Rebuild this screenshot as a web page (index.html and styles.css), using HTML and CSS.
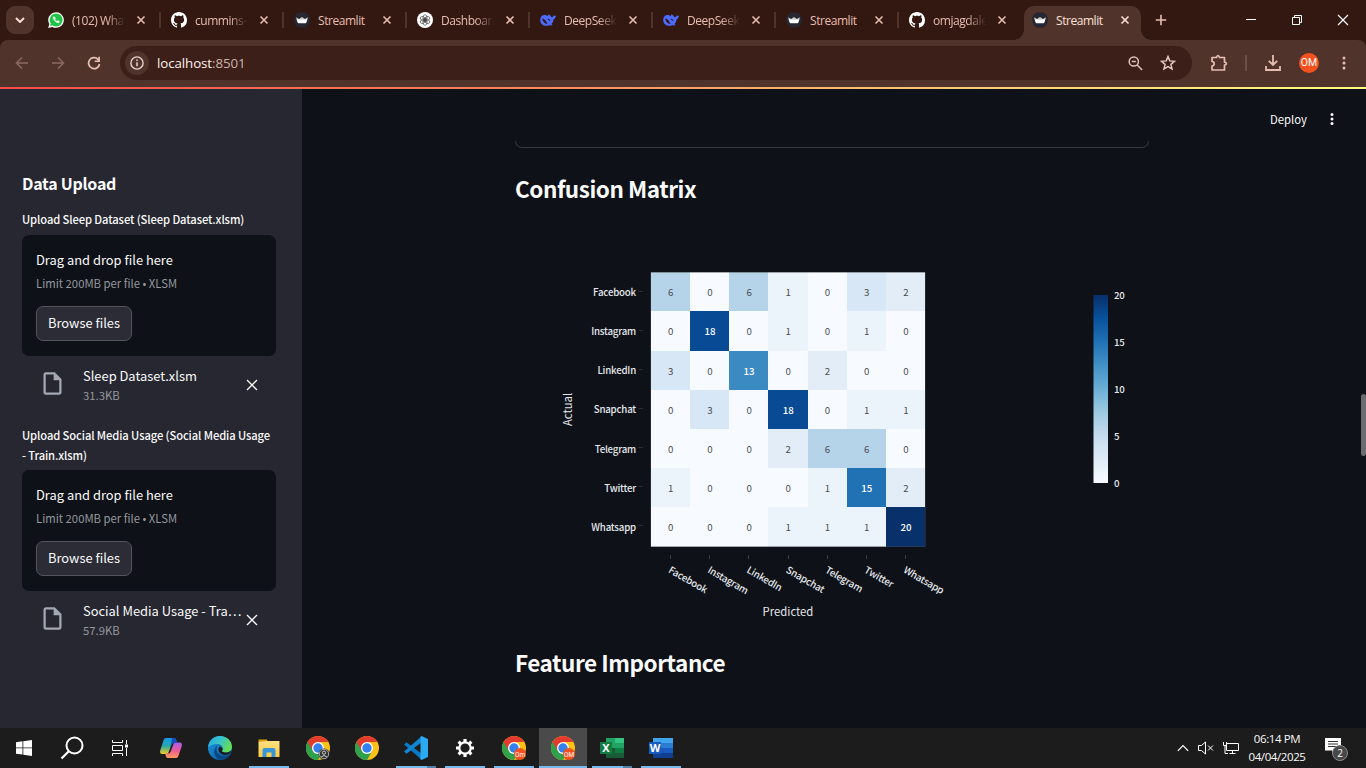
FILE: index.html
```html
<!DOCTYPE html>
<html lang="en">
<head>
<meta charset="utf-8">
<title>Streamlit</title>
<link rel="stylesheet" href="styles.css">
</head>
<body>
<svg class="defs" width="0" height="0" aria-hidden="true">
  <defs>
    <linearGradient id="blues" x1="0" y1="1" x2="0" y2="0">
      <stop offset="0" stop-color="#f7fbff"/><stop offset=".125" stop-color="#deebf7"/><stop offset=".25" stop-color="#c6dbef"/><stop offset=".375" stop-color="#9ecae1"/><stop offset=".5" stop-color="#6baed6"/><stop offset=".625" stop-color="#4292c6"/><stop offset=".75" stop-color="#2171b5"/><stop offset=".875" stop-color="#08519c"/><stop offset="1" stop-color="#08306b"/>
    </linearGradient>
    <linearGradient id="crownfill" x1="0" y1="0" x2="0" y2="1"><stop offset="0" stop-color="#999"/><stop offset=".6" stop-color="#fff"/></linearGradient>
    <linearGradient id="edgeTop" x1="0" y1="0" x2="1" y2=".4"><stop offset="0" stop-color="#2aa8dc"/><stop offset=".5" stop-color="#35c3cf"/><stop offset="1" stop-color="#62de57"/></linearGradient>
    <linearGradient id="edgeLow" x1="0" y1="0" x2="1" y2="1"><stop offset="0" stop-color="#1b9de2"/><stop offset="1" stop-color="#0b4f98"/></linearGradient>
    <linearGradient id="copA" x1="0" y1="0" x2="0" y2="1"><stop offset="0" stop-color="#1699e8"/><stop offset=".5" stop-color="#27a9a8"/><stop offset="1" stop-color="#f4cf22"/></linearGradient>
    <linearGradient id="copB" x1="0" y1="0" x2="0" y2="1"><stop offset="0" stop-color="#a95bef"/><stop offset=".55" stop-color="#ee5e93"/><stop offset="1" stop-color="#fb9e54"/></linearGradient>
    <linearGradient id="folder" x1="0" y1="0" x2="0" y2="1"><stop offset="0" stop-color="#ffe083"/><stop offset="1" stop-color="#fbc945"/></linearGradient>
  </defs>
  <symbol id="x" viewBox="0 0 10 10"><path d="M1.500 1.500l7 7M8.500 1.500l-7 7" fill="none" stroke="currentColor" stroke-width="1.600"/></symbol>
  <symbol id="crown" viewBox="0 0 16 16"><circle cx="8" cy="8" r="8" fill="#262730"/><path d="M1.900 5.300 5.200 7 8 4.700 10.800 7 14.100 5.300 12.500 10.300Q12.200 11.200 11.300 11.200H4.700Q3.800 11.200 3.500 10.300Z" fill="url(#crownfill)"/></symbol>
  <symbol id="github" viewBox="0 0 16 16"><path fill="#fff" d="M8 0C3.58 0 0 3.58 0 8c0 3.54 2.29 6.53 5.47 7.59.4.07.55-.17.55-.38 0-.19-.01-.82-.01-1.49-2.01.37-2.53-.49-2.69-.94-.09-.23-.48-.94-.82-1.13-.28-.15-.68-.52-.01-.53.63-.01 1.08.58 1.23.82.72 1.21 1.87.87 2.33.66.07-.52.28-.87.51-1.07-1.78-.2-3.64-.89-3.64-3.95 0-.87.31-1.59.82-2.15-.08-.2-.36-1.02.08-2.12 0 0 .67-.21 2.2.82.64-.18 1.32-.27 2-.27.68 0 1.36.09 2 .27 1.53-1.04 2.2-.82 2.2-.82.44 1.1.16 1.92.08 2.12.51.56.82 1.27.82 2.15 0 3.07-1.87 3.75-3.65 3.95.29.25.54.73.54 1.48 0 1.07-.01 1.93-.01 2.2 0 .21.15.46.55.38A8.013 8.013 0 0016 8c0-4.42-3.58-8-8-8z"/></symbol>
  <symbol id="whale" viewBox="0 0 16 16"><path fill="#4d6bfe" d="M.2 8C.2 4.500 2.600 2.600 5.200 3c1.400.2 2 .9 2.900 1.300-.3-.8 0-1.500.6-2.100 1.500.7 2 2.500 3.200 3 1-.2 1.400-1 1.900-1.700.4.4 1.200.5 2 .2-.1 1.700-.9 3.100-2.200 3.500-.3 2.300-1.100 3.800-2.300 4.900l1.500.9c-1.600.8-3.200.1-4.100.5C4.500 14.800.2 12.300.2 8Zm2.200-1.800c-.1 2.900 2.300 5.700 5.200 5.600C6.400 9.800 5 6.900 2.400 6.200ZM7 7.300c1.400.1 2.200 1.400 3.300 2.200.3-1.300-.8-2.600-2.100-2.800Z"/></symbol>
  <symbol id="file" viewBox="0 0 24 24"><path fill="#a3a8b4" d="M14 2H6c-1.100 0-1.990.9-1.990 2L4 20c0 1.100.89 2 1.990 2H18c1.100 0 2-.9 2-2V8l-6-6zM6 20V4h7v5h5v11H6z"/></symbol>
  <symbol id="chrome" viewBox="0 0 24 24">
    <circle cx="12" cy="12" r="12" fill="#fbc116"/>
    <path d="M12 12 1.600 6A12 12 0 0 0 12 24L17.200 15Z" fill="#2da14c"/>
    <path d="M1.610 6A12 12 0 0 1 22.390 6H12L6.800 15Z" fill="#e33b2e"/>
    <circle cx="12" cy="12" r="6" fill="#fff"/><circle cx="12" cy="12" r="4.700" fill="#3480ee"/>
  </symbol>
</svg>

<div class="tabstrip">
  <div class="tabsearch"><svg width="10" height="6" viewBox="0 0 10 6"><path d="M1 1l4 4 4-4" fill="none" stroke="#fbdcd3" stroke-width="2"/></svg></div>
  <div class="tab"><svg class="fav" viewBox="0 0 16 16"><path d="M.2 15.900 1.300 12A7.800 7.800 0 1 1 4.300 14.900Z" fill="#fff"/><circle cx="8.100" cy="7.900" r="6.500" fill="#20c446"/><path d="M2 14l.8-2.900 2.100 2.100Z" fill="#20c446"/><path d="M5.300 4.900c-.7 2 2.900 6.300 5.600 5.800l.5-1.300-1.700-.8-.8.8Q7.500 8.800 6.700 7.300l.6-.8-.7-1.700Z" fill="#fff" stroke="#fff" stroke-width=".5"/></svg><span class="title fade">(102) WhatsApp</span><svg class="close"><use href="#x"/></svg></div>
  <div class="tab"><svg class="fav"><use href="#github"/></svg><span class="title fade">cummins-</span><svg class="close"><use href="#x"/></svg></div>
  <div class="tab"><svg class="fav"><use href="#crown"/></svg><span class="title">Streamlit</span><svg class="close"><use href="#x"/></svg></div>
  <div class="tab"><svg class="fav" viewBox="0 0 16 16"><circle cx="8" cy="8" r="8" fill="#fff"/><g fill="none" stroke="#333" stroke-width=".6"><ellipse cx="8" cy="5.800" rx="2" ry="3.100"/><ellipse cx="8" cy="5.800" rx="2" ry="3.100" transform="rotate(60 8 8)"/><ellipse cx="8" cy="5.800" rx="2" ry="3.100" transform="rotate(120 8 8)"/><ellipse cx="8" cy="5.800" rx="2" ry="3.100" transform="rotate(180 8 8)"/><ellipse cx="8" cy="5.800" rx="2" ry="3.100" transform="rotate(240 8 8)"/><ellipse cx="8" cy="5.800" rx="2" ry="3.100" transform="rotate(300 8 8)"/></g></svg><span class="title fade">Dashboard</span><svg class="close"><use href="#x"/></svg></div>
  <div class="tab"><svg class="fav"><use href="#whale"/></svg><span class="title fade">DeepSeek</span><svg class="close"><use href="#x"/></svg></div>
  <div class="tab"><svg class="fav"><use href="#whale"/></svg><span class="title fade">DeepSeek</span><svg class="close"><use href="#x"/></svg></div>
  <div class="tab"><svg class="fav"><use href="#crown"/></svg><span class="title">Streamlit</span><svg class="close"><use href="#x"/></svg></div>
  <div class="tab bare"><svg class="fav"><use href="#github"/></svg><span class="title fade">omjagdale</span><svg class="close"><use href="#x"/></svg></div>
  <div class="tab active"><svg class="fav"><use href="#crown"/></svg><span class="title">Streamlit</span><svg class="close"><use href="#x"/></svg></div>
  <svg class="newtab" width="12" height="12" viewBox="0 0 12 12"><path d="M6 .8v10.400M.8 6h10.400" stroke="#e7bdb1" stroke-width="1.600"/></svg>
  <div class="winctl">
    <svg width="46" height="40"><path d="M18 19.500h10" stroke="#fff"/></svg>
    <svg width="46" height="40"><path d="M18.500 17.500h7v7h-7zM20.500 17.500v-2h7v7h-2" fill="none" stroke="#fff"/></svg>
    <svg width="46" height="40"><path d="M18 15l10 10M28 15 18 25" stroke="#fff" stroke-width="1.200"/></svg>
  </div>
</div>

<div class="toolbarwrap"><div class="toolbar">
  <div class="nav">
    <svg width="14" height="14" viewBox="0 0 14 14"><path d="M13 7H2M7 1.500 1.500 7 7 12.500" fill="none" stroke="#8b685f" stroke-width="1.600"/></svg>
    <svg width="14" height="14" viewBox="0 0 14 14"><path d="M1 7h11M7 1.500 12.500 7 7 12.500" fill="none" stroke="#8b685f" stroke-width="1.600"/></svg>
    <svg width="14" height="14" viewBox="0 0 14 14"><path d="M12.500 8A5.500 5.500 0 1 1 11 3.300L12 4.500" fill="none" stroke="#edc4b8" stroke-width="1.700"/><path d="M12.900.8V6H7.700V4.500h3.600V.8Z" fill="#edc4b8"/></svg>
  </div>
  <div class="omnibox">
    <span class="info"><svg width="14" height="14" viewBox="0 0 14 14"><circle cx="7" cy="7" r="6.100" fill="none" stroke="#e9d2cb" stroke-width="1.400"/><path d="M7 6.200v4M7 3.600v1.500" stroke="#e9d2cb" stroke-width="1.500"/></svg></span>
    <span class="url">localhost<i>:8501</i></span>
    <svg class="lens" width="15" height="15" viewBox="0 0 15 15"><circle cx="5.800" cy="5.500" r="4.600" fill="none" stroke="#dcc3bb" stroke-width="1.500"/><path d="M9.200 9l4.900 5M3.800 5.500h4" stroke="#dcc3bb" stroke-width="1.500"/></svg>
    <svg width="16" height="16" viewBox="0 0 16 16"><path d="M8 1.600l1.800 4.300 4.700.4-3.600 3 1.100 4.600L8 11.500l-4 2.400 1.100-4.600-3.600-3 4.700-.4Z" fill="none" stroke="#e1c8c0" stroke-width="1.500"/></svg>
  </div>
  <svg class="ext" width="18" height="18" viewBox="0 0 18 18"><path d="M2 3.500H6.500Q7 1.600 8 1.600T9.500 3.500H14.500V8.200Q16.400 8.500 16.400 9.700T14.500 11V16H2V12Q4.200 11.600 4.200 9.700T2 7.500Z" fill="none" stroke="#e7bdb1" stroke-width="1.700" stroke-linejoin="round"/></svg>
  <span class="bar"></span>
  <svg width="16" height="16" viewBox="0 0 16 16"><path d="M8 0v10M3.800 5.800 8 10l4.200-4.200M1 11v4h14v-4" fill="none" stroke="#e7bdb1" stroke-width="1.800"/></svg>
  <span class="avatar">OM</span>
  <svg width="4" height="14" viewBox="0 0 4 14" fill="#e7bdb1"><circle cx="2" cy="2" r="1.500"/><circle cx="2" cy="7" r="1.500"/><circle cx="2" cy="12" r="1.500"/></svg>
</div></div>
<div class="rainbow"></div>

<div class="app">
  <aside class="sidebar">
    <h2>Data Upload</h2>
    <p class="label">Upload Sleep Dataset (Sleep Dataset.xlsm)</p>
    <div class="drop"><p>Drag and drop file here</p><small>Limit 200MB per file • XLSM</small><button>Browse files</button></div>
    <div class="filerow"><svg class="doc"><use href="#file"/></svg><div class="meta"><p>Sleep Dataset.xlsm</p><small>31.3KB</small></div><svg class="rm" viewBox="0 0 12 12"><path d="M1 1l10 10M11 1 1 11" stroke="#fafafa" stroke-width="1.300"/></svg></div>
    <p class="label second">Upload Social Media Usage (Social Media Usage<br>- Train.xlsm)</p>
    <div class="drop"><p>Drag and drop file here</p><small>Limit 200MB per file • XLSM</small><button>Browse files</button></div>
    <div class="filerow"><svg class="doc"><use href="#file"/></svg><div class="meta"><p>Social Media Usage - Tra…</p><small>57.9KB</small></div><svg class="rm" viewBox="0 0 12 12"><path d="M1 1l10 10M11 1 1 11" stroke="#fafafa" stroke-width="1.300"/></svg></div>
  </aside>
  <main class="main">
    <header class="appbar"><span>Deploy</span><svg width="4" height="14" viewBox="0 0 4 14" fill="#fafafa"><circle cx="2" cy="2.500" r="1.500"/><circle cx="2" cy="7" r="1.500"/><circle cx="2" cy="11.500" r="1.500"/></svg></header>
    <div class="block">
      <div class="cardend"></div>
      <h3>Confusion Matrix</h3>
      <svg class="chart" id="chart" width="634" height="428" viewBox="515 214 634 428"></svg>
      <h3>Feature Importance</h3>
    </div>
    <span class="thumb"></span>
  </main>
</div>

<footer class="taskbar">
  <div class="sys">
    <span><svg width="16" height="16" viewBox="0 0 16 16" fill="#fff"><path d="M0 2.200 6.500 1.300V7.500H0ZM7.300 1.200 16 0V7.500H7.300ZM0 8.300H6.500V14.600L0 13.700ZM7.300 8.300H16V16L7.300 14.800Z"/></svg></span>
    <span><svg width="24" height="24" viewBox="0 0 24 24"><circle cx="14.500" cy="9.500" r="8" fill="none" stroke="#fff" stroke-width="2"/><path d="M8.800 15.200 1.500 22.500" stroke="#fff" stroke-width="2.200"/></svg></span>
    <span><svg width="16" height="16" viewBox="0 0 16 16"><path d="M.5 0v2.500h10V0M.5 16v-2.500h10V16M.5 5.500h10v5H.5zM14.500 0v4M14.500 8v8" fill="none" stroke="#fff"/><path d="M13 4.500h3v3h-3z" fill="#fff"/></svg></span>
  </div>
  <div class="apps">
    <span><svg width="22" height="20" viewBox="0 0 22 20"><path d="M6 0h8q1.500 0 2 1.500L17 5h-3q-2 0-2.700 2L8.500 14.500Q8 16 6 16H2Q-.8 16 .4 12L3.600 2Q4.200 0 6 0Z" fill="url(#copA)"/><path d="M16 20H8q-1.500 0-2-1.500L5 15.500h3q2 0 2.700-2L13.500 6Q14 4.500 16 4.500h4q2.800 0 1.600 4L18.400 18Q17.800 20 16 20Z" fill="url(#copB)"/><path d="M12 0h2q1.500 0 2 1.500L17 5h-3q-2 0-2.700 2L10.500 9Z" fill="#164fc2"/></svg></span>
    <span><svg width="24" height="24" viewBox="0 0 24 24"><circle cx="12" cy="12" r="12" fill="url(#edgeLow)"/><path d="M.1 11C1 4.600 5.700 0 12 0c7 0 12 5 12 11 0 3.600-2.800 5.600-6 5.600-3.700 0-4.700-1.300-3.600-2.600C15.800 12 14 8 9.500 8 5 8 1.500 9.500.1 11Z" fill="url(#edgeTop)"/><path d="M9.500 9.500C7 13.500 9.300 19.500 15 20c3 .3 5.500-.7 7.300-2A12 12 0 0 1 13 24C6 23 4 13 9.500 9.500Z" fill="#0a4785"/><path d="M14.400 14c-1.100 1.300-.1 2.600 3.600 2.600 2 0 3.900-.8 5-2.100l-.7 2.500C18.500 20 13 19.500 11 15.500c-1-2-.3-4.500 1-4.700 1.700.2 3.300 1.800 2.400 3.200Z" fill="#1c1c1c"/></svg></span>
    <span class="on"><svg width="22" height="20" viewBox="0 0 22 20"><path d="M.5 1.500h8.500l1 2.500H.5Z" fill="#dda10f"/><path d="M.5 4 9 3h12.500v16H.5Z" fill="url(#folder)"/><path d="M4.500 12q0-2 2-2h9q2 0 2 2v7h-4v-4.500h-5V19h-4Z" fill="#3795d8"/></svg></span>
    <span><svg width="24" height="24" viewBox="0 0 24 24"><use href="#chrome"/><circle cx="18" cy="18" r="5.500" fill="#222"/><circle cx="18" cy="18" r="4.700" fill="#333" stroke="#aaa"/><circle cx="18" cy="16.700" r="1.600" fill="none" stroke="#ccc"/><path d="M15 21q3-3 6 0" fill="none" stroke="#ccc"/></svg></span>
    <span><svg width="24" height="24"><use href="#chrome"/></svg></span>
    <span class="on multi"><svg width="24" height="24" viewBox="0 0 24 24"><path d="M0 8.500 2.500 6.200 18 18v6Z" fill="#0879c4"/><path d="M0 15.500 2.500 17.800 18 6V0Z" fill="#1286d2"/><path d="M17.500 0 24 3v18l-6.500 3-1-.8V.8Z" fill="#2ba9f2"/></svg></span>
    <span class="on"><svg width="20" height="20" viewBox="-10 -10 20 20"><circle r="5.700" fill="none" stroke="#fff" stroke-width="2.200"/><path id="teeth" d="M-1.600-9h3.200v3h-3.200zM-1.600 6h3.200v3h-3.200zM-9-1.600h3v3.200h-3zM6-1.600h3v3.200h-3z" fill="#fff"/><use href="#teeth" transform="rotate(45)"/></svg></span>
    <span class="on"><svg width="24" height="24" viewBox="0 0 24 24"><use href="#chrome"/><circle cx="18" cy="18" r="6" fill="#f4511e"/><text class="badge" x="18" y="20.500">Om</text></svg></span>
    <span class="on current"><svg width="24" height="24" viewBox="0 0 24 24"><use href="#chrome"/><circle cx="18" cy="18" r="6" fill="#f4511e"/><text class="badge" x="18" y="20.500">OM</text></svg></span>
    <span class="on multi"><svg width="24" height="22" viewBox="0 0 24 22"><path d="M6 1h18v20H6z" fill="#21a366"/><path d="M15 1h9v5h-9z" fill="#33c481"/><path d="M6 11h9v5H6z" fill="#185c37"/><path d="M15 11h9v5h-9z" fill="#107c41"/><path d="M6 16h18v5H6z" fill="#185c37"/><path d="M0 5h12v12H0z" fill="#107c41"/><text class="office" x="6" y="15">X</text></svg></span>
    <span class="on"><svg width="24" height="22" viewBox="0 0 24 22"><path d="M4 1h20v5H4z" fill="#41a5ee"/><path d="M4 6h20v5H4z" fill="#2b7cd3"/><path d="M4 11h20v5H4z" fill="#185abd"/><path d="M4 16h20v5H4z" fill="#103f91"/><path d="M0 5h12v12H0z" fill="#185abd"/><text class="office" x="6" y="15">W</text></svg></span>
  </div>
  <div class="tray">
    <svg width="12" height="8" viewBox="0 0 12 8"><path d="M.8 6.800 6 1.500l5.200 5.300" fill="none" stroke="#fff" stroke-width="1.200"/></svg>
    <svg width="16" height="14" viewBox="0 0 16 14"><path d="M.5 4.500h3L7.500 1v12l-4-3.500h-3ZM10 4.500l5 5M15 4.500l-5 5" fill="none" stroke="#fff"/></svg>
    <svg class="net" width="16" height="14" viewBox="0 0 16 14"><path d="M3.500 2.500h12v7h-12zM9.500 9.500v3M6.500 12.500h6M.5 1v3.500h3V1M2 4.500v8h3" fill="none" stroke="#fff"/></svg>
    <div class="clock"><span>06:14 PM</span><span>04/04/2025</span></div>
    <div class="notif"><svg width="16" height="16" viewBox="0 0 16 16"><path d="M0 0h16v12.500H10L7 15.500V12.500H0Z" fill="#fff"/><path d="M3 3.500h10M3 6h10M3 8.500h10" stroke="#333"/></svg><b>2</b></div>
  </div>
</footer>
<script src="chart.js"></script>
</body>
</html>
```
FILE: styles.css
```css
* { box-sizing: border-box; margin: 0; padding: 0; }
body { width: 1366px; height: 768px; overflow: hidden; display: flex; flex-direction: column; background: #0e1117; font-family: "Noto Sans CJK JP", "Noto Sans", sans-serif; color: #fafafa; }
svg { display: block; flex: none; }
.defs { position: absolute; }

.tabstrip { height: 40px; flex: none; display: flex; align-items: center; background: #321811; font-family: "Open Sans", sans-serif; padding-left: 6px; }
.tabsearch { width: 28px; height: 28px; margin-right: 4px; border-radius: 9px; background: #50342c; display: flex; align-items: center; justify-content: center; }
.tab { width: 123px; height: 16px; padding-left: 10px; border-right: 2px solid #50342c; display: flex; align-items: center; flex: none; color: #e7bdb1; }
.tab.bare { border-color: transparent; }
.fav { width: 16px; height: 16px; margin-right: 8px; }
.title { width: 53px; overflow: hidden; white-space: nowrap; font-size: 12px; line-height: 18px; letter-spacing: -.45px; padding-top: 1px; }
.title.fade { -webkit-mask-image: linear-gradient(90deg, #000 65%, transparent); mask-image: linear-gradient(90deg, #000 65%, transparent); }
.close { width: 10px; height: 10px; margin-left: 11px; }
.tab.active { position: relative; align-self: flex-end; width: 117px; height: 34px; margin-left: 2px; padding: 0 0 6px 8px; border: 0; border-radius: 10px 10px 0 0; background: #50342c; color: #ffe0d8; }
.tab.active::before, .tab.active::after { content: ""; position: absolute; bottom: 0; width: 10px; height: 10px; }
.tab.active::before { left: -10px; background: radial-gradient(circle at 0 0, transparent 9.500px, #50342c 10px); }
.tab.active::after { right: -10px; background: radial-gradient(circle at 100% 0, transparent 9.500px, #50342c 10px); }
.newtab { margin-left: 14px; }
.winctl { display: flex; margin-left: auto; }

.toolbarwrap { background: #321811; flex: none; }
.toolbar { height: 47px; border-radius: 8px 8px 0 0; background: #50342c; display: flex; align-items: center; padding: 0 20px 1px 15px; }
.nav { display: flex; gap: 22px; margin-right: 19px; }
.omnibox { width: 1072px; flex: none; height: 34px; border-radius: 17px; background: #3b1f18; display: flex; align-items: center; padding: 0 16px 0 5px; }
.info { width: 24px; height: 24px; border-radius: 50%; background: #50342c; display: flex; align-items: center; justify-content: center; }
.url { margin-left: 8px; font: 13.300px/20px "Open Sans", sans-serif; letter-spacing: -.08px; color: #fff0ec; flex: 1; }
.url i { font-style: normal; color: #cdb2aa; }
.lens { margin-right: 17px; }
.ext { margin: 0 17px 0 18px; }
.bar { width: 2px; height: 16px; background: #6e4e45; margin-right: 18px; }
.avatar { width: 20px; height: 20px; margin-left: 18px; border-radius: 50%; background: #f4511e; color: #fff; font: 10.500px/20px Roboto, sans-serif; text-align: center; }
.avatar + svg { margin-left: auto; }
.rainbow { height: 2px; flex: none; background: linear-gradient(90deg, #ff4b4b, #ff8057 35%, #ffc070 65%, #fffd80); }

.app { flex: 1; min-height: 0; display: flex; }
.sidebar { width: 302px; flex: none; background: #262730; padding: 81px 26px 0 22px; }
.sidebar h2 { font-size: 16px; line-height: 26px; font-weight: 700; letter-spacing: -.25px; }
.label { font-size: 11.200px; line-height: 20px; font-weight: 500; letter-spacing: -.1px; margin-top: 13px; margin-bottom: 6px; white-space: nowrap; }
.label.second { margin-top: 14px; margin-bottom: 5px; }
.drop { height: 121px; border-radius: 7px; background: #0e1117; padding: 15px 14px; display: flex; flex-direction: column; align-items: flex-start; }
.drop p, .meta p { font-size: 12.900px; line-height: 20px; white-space: nowrap; }
.drop small, .meta small { font-size: 11.300px; line-height: 18px; color: #95989e; }
.drop small { margin-top: 4px; }
.drop button { margin-top: 14px; width: 96px; height: 36px; border: 1px solid #53545c; border-radius: 7px; background: #2b2c36; color: #fafafa; font: 12.900px/20px "Noto Sans CJK JP", sans-serif; padding-bottom: 2px; }
.filerow { height: 55px; display: flex; padding: 10px 0 0 17px; }
.doc { width: 27px; height: 27px; margin-top: 4px; margin-right: 17px; }
.meta { width: 163px; display: flex; flex-direction: column; }
.rm { width: 12px; height: 12px; margin-top: 13px; }

.main { flex: 1; position: relative; background: #0e1117; }
.appbar { height: 52px; display: flex; justify-content: flex-end; align-items: center; padding: 8px 32px 0 0; gap: 23px; font-size: 11.300px; }
.appbar span { padding-bottom: 1px; }
.block { width: 634px; margin-left: 213px; }
.cardend { height: 7px; border: 1px solid #35373c; border-top: 0; border-radius: 0 0 7px 7px; }
.block h3 { font-size: 22.500px; line-height: 34px; font-weight: 600; letter-spacing: -.45px; padding-top: 23px; height: 66px; }
.chart + h3 { padding-top: 3px; }
.thumb { position: absolute; right: 0; top: 305px; width: 5px; height: 62px; border-radius: 3px; background: #6b6c70; }

.chart text { font-size: 9.700px; fill: #e4e7ec; }
.chart .tick { font-weight: 500; letter-spacing: -.2px; }
.chart .end { text-anchor: end; }
.chart .mid { text-anchor: middle; }
.chart .dark { fill: #4b4d52; }
.chart .light { fill: #fff; font-weight: 500; }
.chart .axis { font-size: 11.300px; text-anchor: middle; }

.taskbar { height: 40px; flex: none; background: #1c1c1c; display: flex; }
.sys, .apps { display: flex; }
.sys span { width: 48px; display: flex; align-items: center; justify-content: center; }
.apps { margin-left: 3px; gap: 1px; }
.apps span { width: 48px; height: 40px; display: flex; align-items: center; justify-content: center; }
.apps .on { background: linear-gradient(#76b9ed, #76b9ed) 4px 38px / 40px 2px no-repeat; }
.apps .multi { background: linear-gradient(90deg, #76b9ed 31px, #5382a6 31px) 4px 38px / 40px 2px no-repeat; }
.apps .current { background: linear-gradient(#76b9ed, #76b9ed) 0 38px / 48px 2px no-repeat #4a4a4a; }
.badge { font: 6.500px Roboto, sans-serif; fill: #fff; text-anchor: middle; }
.office { font: bold 11px "Open Sans", sans-serif; fill: #fff; text-anchor: middle; }
.tray { margin-left: auto; display: flex; align-items: center; padding-right: 15px; }
.tray > svg { margin-right: 9px; }
.tray > .net { margin-right: 7px; }
.clock { width: 62px; display: flex; flex-direction: column; text-align: center; font: 11.500px/18px "Open Sans", sans-serif; letter-spacing: -.4px; white-space: nowrap; }
.notif { position: relative; width: 26px; height: 20px; margin-left: 17px; }
.notif b { position: absolute; left: 7px; top: 7px; width: 16px; height: 16px; border-radius: 50%; background: #484848; border: 1px solid #888; font: 10px/14px "Open Sans", sans-serif; text-align: center; }
```
FILE: chart.js
```js
const apps = ["Facebook", "Instagram", "LinkedIn", "Snapchat", "Telegram", "Twitter", "Whatsapp"];
const matrix = [
  [6, 0, 6, 1, 0, 3, 2],
  [0, 18, 0, 1, 0, 1, 0],
  [3, 0, 13, 0, 2, 0, 0],
  [0, 3, 0, 18, 0, 1, 1],
  [0, 0, 0, 2, 6, 6, 0],
  [1, 0, 0, 0, 1, 15, 2],
  [0, 0, 0, 1, 1, 1, 20]
];
const shade = { 0: "#f7fbff", 1: "#ebf3fb", 2: "#e3edf7", 3: "#d8e7f5", 6: "#b5d4e9", 13: "#3b8bc2", 15: "#2171b5", 18: "#084b94", 20: "#08306b" };
const xs = [651, 690, 729, 768, 808, 847, 886, 925];
const ys = [272, 311, 351, 390, 429, 468, 507, 547];
let out = "";
matrix.forEach((row, r) => {
  const cy = 292 + r * 39.15;
  row.forEach((v, c) => {
    out += `<rect x="${xs[c]}" y="${ys[r]}" width="${xs[c + 1] - xs[c]}" height="${ys[r + 1] - ys[r]}" fill="${shade[v]}"/>`;
    out += `<text class="mid ${v > 12 ? "light" : "dark"}" x="${670.700 + c * 39.2}" y="${cy + 4.2}">${v}</text>`;
  });
  out += `<text class="tick end" x="636" y="${cy + 4}">${apps[r]}</text>`;
  out += `<path d="M638.500 ${Math.floor(cy) - .5}h4.500" stroke="#2a2d34"/>`;
  const cx = 670.600 + r * 39.15;
  out += `<path d="M${Math.floor(cx) + .5} 555v4" stroke="#3a3d44"/>`;
  out += `<text class="tick" transform="translate(${cx - 2.8} 572) rotate(30)">${apps[r]}</text>`;
});
out += '<path d="M650.500 272.500h275v274h-275z" fill="none" stroke="#444" stroke-opacity=".45"/>';
out += '<text class="axis" x="788" y="616">Predicted</text><text class="axis" transform="translate(572 409.500) rotate(-90)">Actual</text>';
out += '<rect x="1093.500" y="295" width="14.500" height="188" fill="url(#blues)"/>';
[20, 15, 10, 5, 0].forEach((v, i) => { out += `<text class="tick" x="1114" y="${299 + i * 47}">${v}</text>`; });
document.getElementById("chart").innerHTML = out;
```
